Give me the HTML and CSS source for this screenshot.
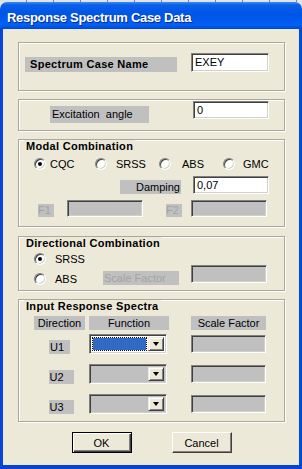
FILE: index.html
```html
<!DOCTYPE html>
<html lang="en">
<head>
<meta charset="utf-8">
<title>Response Spectrum Case Data</title>
<link rel="stylesheet" href="styles.css">
</head>
<body>
<div class="win">
  <div class="desk"></div>
  <div class="titlebar">Response Spectrum Case Data</div>
  <div class="client">
    <div class="main">

      <div class="etch name-box">
        <div class="row spread">
          <span class="lbl lbl-bold name-lbl">Spectrum Case Name</span>
          <span class="txt name-txt">EXEY</span>
        </div>
      </div>

      <div class="etch angle-box">
        <div class="row spread">
          <span class="lbl angle-lbl">Excitation&nbsp; angle</span>
          <span class="txt angle-txt">0</span>
        </div>
      </div>

      <div class="etch group modal">
        <div class="caption">Modal Combination</div>
        <div class="radio-row">
          <label class="opt g4"><span class="radio on"></span>CQC</label>
          <label class="opt g9"><span class="radio"></span>SRSS</label>
          <label class="opt g11"><span class="radio"></span>ABS</label>
          <label class="opt g8"><span class="radio"></span>GMC</label>
        </div>
        <div class="row damp-row">
          <span class="lbl damp-lbl">Damping</span>
          <span class="txt damp-txt">0,07</span>
        </div>
        <div class="row f-row">
          <span class="lbl off f-lbl">F1</span>
          <span class="txt dis f1-txt"></span>
          <span class="lbl off f-lbl f2-lbl">F2</span>
          <span class="txt dis f2-txt"></span>
        </div>
      </div>

      <div class="etch group dir">
        <div class="caption">Directional Combination</div>
        <div class="dir-row1">
          <label class="opt g9"><span class="radio on"></span>SRSS</label>
        </div>
        <div class="row dir-row2">
          <label class="opt g9 abs-opt"><span class="radio"></span>ABS</label>
          <span class="lbl off sf-lbl">Scale Factor</span>
          <span class="txt dis sf-txt"></span>
        </div>
      </div>

      <div class="etch group spectra">
        <div class="caption">Input Response Spectra</div>
        <div class="row head-row">
          <span class="lbl head c-dir">Direction</span>
          <span class="lbl head c-fn">Function</span>
          <span class="lbl head c-sf">Scale Factor</span>
        </div>
        <div class="row u-row first">
          <span class="c-dir"><span class="lbl u-lbl">U1</span></span>
          <span class="combo c-fn focus"><span class="field"><span class="sel"></span></span><span class="drop"></span></span>
          <span class="txt dis c-sf"></span>
        </div>
        <div class="row u-row">
          <span class="c-dir"><span class="lbl u-lbl wide">U2</span></span>
          <span class="combo c-fn"><span class="field"></span><span class="drop"></span></span>
          <span class="txt dis c-sf"></span>
        </div>
        <div class="row u-row">
          <span class="c-dir"><span class="lbl u-lbl wide">U3</span></span>
          <span class="combo c-fn"><span class="field"></span><span class="drop"></span></span>
          <span class="txt dis c-sf"></span>
        </div>
      </div>

      <div class="buttons">
        <button class="btn default">OK</button>
        <button class="btn">Cancel</button>
      </div>

    </div>
  </div>
</div>
</body>
</html>
```

FILE: styles.css
```css
*{box-sizing:border-box;}
html,body{margin:0;padding:0;}
body{
  font-family:"Liberation Sans",Arial,sans-serif;
  font-size:11px;
  color:#000;
  background:#e4e8ee;
}

/* ---- window chrome ---- */
.win{ width:302px; height:469px; display:flex; flex-direction:column; }
.desk{ height:2px; background:repeating-linear-gradient(90deg,#dfe3ea 0 26px,#7d8796 26px 27px); }
.titlebar{
  height:27px;
  padding:4px 0 0 7px;
  line-height:23px;
  border-radius:7px 7px 0 0;
  background:linear-gradient(#3b8cf7 0, #0a5fe8 3px, #0054e6 45%, #0060f5 85%, #0046d5 100%);
  color:#fff; font-weight:700; font-size:13px; letter-spacing:-.3px;
  text-shadow:1px 1px 0 #0a2a8c;
}
.client{
  flex:1;
  display:flex; flex-direction:column;
  background:#ece9d8;
  border-left:3px solid #0846d8;
  border-right:3px solid #0846d8;
  border-bottom:4px solid #0842d0;
  padding:4px 4px 2px 5px;
}

/* etched group lines */
.etch{
  border:1px solid #aca899;
  box-shadow:1px 1px 0 #fff, inset 1px 1px 0 #fff;
}
.main{ flex:1; padding:9px 10px 0 10px; }

.row{ display:flex; align-items:flex-start; }
.spread{ justify-content:space-between; }

/* grey caption labels */
.lbl{ background:#c0c0c0; display:block; white-space:nowrap; }
.lbl-bold{ font-weight:700; letter-spacing:.3px; }
.lbl.off{ color:#a3a3a3; }

/* sunken text boxes */
.txt{
  display:block; background:#fff;
  border:1px solid; border-color:#808080 #fff #fff #808080;
  box-shadow:inset 1px 1px 0 #404040, inset -1px -1px 0 #d4d0c8;
  padding:0 3px; line-height:16px; height:18px;
}
.txt.dis{ background:#c0c0c0; }

.name-box{ height:49px; }
.name-box .row{ padding:10px 15px 0 6px; align-items:flex-end; }
.name-lbl{ width:152px; height:15px; line-height:15px; padding-left:5px; }
.name-txt{ width:78px; height:19px; line-height:17px; }

.angle-box{ height:32px; margin-top:8px; }
.angle-box .row{ padding:1px 15px 0 31px; }
.angle-lbl{ width:99px; height:17px; line-height:17px; margin-top:5px; padding-left:2px; }
.angle-txt{ width:76px; }

/* framed groups with caption over the line */
.group{ margin-top:8px; }
.caption{
  display:inline-block; margin:-3px 0 0 5px; padding:0 2px;
  background:#ece9d8; font-weight:700; letter-spacing:.3px; line-height:13px;
}
.modal{ height:88px; }
.dir{ height:55px; margin-top:9px; }
.spectra{ height:123px; }

/* option buttons */
.opt{ display:flex; align-items:center; height:12px; line-height:12px; }
.g4{ gap:4px; } .g8{ gap:8px; } .g9{ gap:9px; } .g11{ gap:11px; }
.radio{
  width:12px; height:12px; border-radius:50%; flex-shrink:0;
  background:#fff;
  border:1px solid; border-color:#808080 #fff #fff #808080;
  box-shadow:inset 1px 1px 0 #404040, inset -1px -1px 0 #d4d0c8;
  display:flex; align-items:center; justify-content:center;
}
.radio.on::after{ content:""; width:4px; height:4px; border-radius:50%; background:#000; }

.radio-row{ display:grid; grid-template-columns:61px 64px 64px auto; margin-top:5px; padding-left:15px; }
.damp-row{ justify-content:flex-end; gap:12px; margin-top:6px; padding-right:15px; }
.damp-lbl{ width:61px; height:14px; line-height:14px; margin-top:4px; text-align:right; padding-right:1px; }
.damp-txt{ width:76px; }

.f-row{ margin-top:6px; padding-left:19px; }
.f-lbl{ width:16px; height:13px; line-height:13px; margin-top:4px; }
.f1-txt{ width:76px; height:17px; margin-left:13px; }
.f2-lbl{ margin-left:23px; }
.f2-txt{ width:76px; height:17px; margin-left:9px; }

.dir-row1{ margin-top:3px; padding-left:15px; }
.dir-row2{ padding-left:15px; }
.abs-opt{ width:69px; margin-top:8px; }
.sf-lbl{ width:76px; height:14px; line-height:14px; margin-top:6px; padding-left:1px; }
.sf-txt{ width:76px; margin-left:12px; }

/* spectra table */
.head-row{ margin-top:3px; padding-left:15px; }
.head{ height:14px; line-height:14px; text-align:center; }
.c-dir{ width:51px; margin-right:4px; display:flex; justify-content:center; }
.c-fn{ width:80px; margin-right:22px; }
.c-sf{ width:75px; }
.u-row{ margin-top:10px; padding-left:15px; }
.u-row.first{ margin-top:4px; }
.u-lbl{ width:21px; height:14px; line-height:14px; margin-top:6px; padding-left:1px; }
.u-lbl.wide{ width:25px; margin-left:3px; }
.u-row .c-sf{ margin-top:1px; }
.u-row .c-fn{ width:78px; margin-right:24px; }

.combo{
  display:flex; height:20px;
  border:1px solid; border-color:#808080 #fff #fff #808080;
  box-shadow:inset 1px 1px 0 #404040, inset -1px -1px 0 #d4d0c8;
  padding:2px 2px 2px 2px; background:#c0c0c0;
}
.combo .field{ flex:1; display:flex; }
.combo.focus{ background:#fff; }
.combo.focus .field{ padding:1px; }
.combo .sel{ flex:1; background:#316ac5; outline:1px dotted #000; outline-offset:0; }
.drop{
  width:16px; margin-left:1px;
  background:#ece9d8;
  border:1px solid; border-color:#ece9d8 #404040 #404040 #ece9d8;
  box-shadow:inset 1px 1px 0 #fff, inset -1px -1px 0 #808080;
  display:flex; align-items:center; justify-content:center;
}
.drop::after{
  content:""; width:0; height:0;
  border-left:3.5px solid transparent; border-right:3.5px solid transparent;
  border-top:4px solid #000;
}

/* push buttons */
.buttons{ display:flex; justify-content:center; gap:40px; margin-top:10px; }
.btn{
  width:60px; height:21px; padding:0; margin:0;
  font:11px "Liberation Sans",Arial,sans-serif; color:#000;
  background:#ece9d8;
  border:1px solid; border-color:#fff #404040 #404040 #fff;
  box-shadow:inset -1px -1px 0 #808080;
}
.btn.default{
  border:1px solid #000;
  box-shadow:inset 1px 1px 0 #fff, inset -1px -1px 0 #404040, inset -2px -2px 0 #808080;
}
```
